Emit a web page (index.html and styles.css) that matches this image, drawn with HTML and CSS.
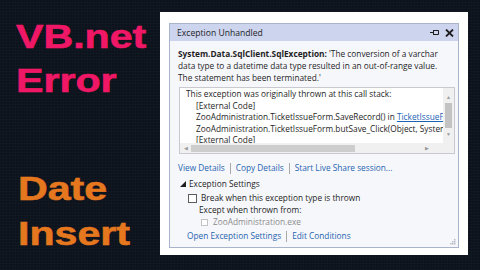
FILE: index.html
```html
<!DOCTYPE html>
<html>
<head>
<meta charset="utf-8">
<link rel="stylesheet" href="styles.css">
</head>
<body>
<div class="page">
  <div class="promo">
    <div class="promo-top">
      <div class="big">VB.net</div>
      <div class="big">Error</div>
    </div>
    <div class="promo-bottom">
      <div class="big">Date</div>
      <div class="big">Insert</div>
    </div>
  </div>
  <div class="frame">
    <div class="dialog">
      <div class="titlebar">
        <span class="title">Exception Unhandled</span>
        <span class="tools">
          <svg class="pin" width="9" height="7" viewBox="0 0 9 7"><path d="M0 3.5H3.5M3.5 1V6M3.5 1.5H8.5V5.5H3.5" fill="none" stroke="#1e1e1e" stroke-width="1"/></svg>
          <svg class="close" width="9" height="8" viewBox="0 0 9 8"><path d="M1 0.5L8 7.5M8 0.5L1 7.5" stroke="#1e1e1e" stroke-width="1.8"/></svg>
        </span>
      </div>
      <div class="body">
        <div class="message">
          <div class="line"><b>System.Data.SqlClient.SqlException:</b> 'The conversion of a varchar</div>
          <div class="line">data type to a datetime data type resulted in an out-of-range value.</div>
          <div class="line">The statement has been terminated.'</div>
        </div>
        <div class="stackbox">
          <div class="stack">
            <div class="sline">This exception was originally thrown at this call stack:</div>
            <div class="sline ind">[External Code]</div>
            <div class="sline ind">ZooAdministration.TicketIssueForm.SaveRecord() in <span class="ulink">TicketIssueFor</span></div>
            <div class="sline ind">ZooAdministration.TicketIssueForm.butSave_Click(Object, System.E</div>
            <div class="sline ind">[External Code]</div>
          </div>
          <div class="vscroll">
            <span class="arr">▲</span>
            <span class="vthumb"></span>
            <span class="arr">▼</span>
          </div>
          <div class="hscroll">
            <span class="arr">◀</span>
            <span class="hthumb"></span>
            <span class="arr">▶</span>
          </div>
          <div class="corner"></div>
        </div>
        <div class="links">
          <span class="link">View Details</span><span class="sep"></span><span class="link">Copy Details</span><span class="sep"></span><span class="link">Start Live Share session...</span>
        </div>
        <div class="settings-head">
          <svg class="tri" width="6" height="6" viewBox="0 0 6 6"><path d="M6 0V6H0Z" fill="#1e1e1e"/></svg>
          <span>Exception Settings</span>
        </div>
        <div class="check-row">
          <span class="box"></span><span>Break when this exception type is thrown</span>
        </div>
        <div class="except">Except when thrown from:</div>
        <div class="check-row sub">
          <span class="box dis"></span><span class="grey">ZooAdministration.exe</span>
        </div>
        <div class="links bottom">
          <span class="link">Open Exception Settings</span><span class="sep"></span><span class="link">Edit Conditions</span>
        </div>
        <svg class="grip" width="6" height="6" viewBox="0 0 6 6"><g fill="#b8bcc8"><rect x="4" y="0" width="1.5" height="1.5"/><rect x="2" y="2" width="1.5" height="1.5"/><rect x="4" y="2" width="1.5" height="1.5"/><rect x="0" y="4" width="1.5" height="1.5"/><rect x="2" y="4" width="1.5" height="1.5"/><rect x="4" y="4" width="1.5" height="1.5"/></g></svg>
      </div>
    </div>
  </div>
</div>
</body>
</html>
```
FILE: styles.css
```css
html, body {
  margin: 0;
  padding: 0;
}
body {
  width: 480px;
  height: 270px;
  overflow: hidden;
  background-color: #0d131c;
  background-image:
    repeating-linear-gradient(0deg, rgba(255,255,255,0.015) 0 1px, transparent 1px 3px),
    repeating-linear-gradient(90deg, rgba(255,255,255,0.012) 0 1px, transparent 1px 3px);
}
.page {
  display: flex;
  height: 270px;
}
.promo {
  width: 160px;
  flex: none;
  display: flex;
  flex-direction: column;
  padding-top: 14px;
  padding-left: 16px;
  box-sizing: border-box;
  font-family: "Liberation Sans", Arial, sans-serif;
  font-weight: bold;
  font-size: 34px;
}
.big {
  transform: scaleX(1.21);
  transform-origin: left center;
  white-space: nowrap;
  -webkit-text-stroke: 0.6px currentColor;
}
.promo-top .big {
  line-height: 44px;
  color: #ef1766;
}
.promo-bottom {
  margin-top: 64px;
  padding-left: 2px;
}
.promo-bottom .big {
  line-height: 45px;
  color: #e5771f;
}
.frame {
  margin-top: 12px;
  width: 308px;
  height: 243px;
  background: #ffffff;
  padding: 11px 9px 7px 9px;
  box-sizing: border-box;
}
.dialog {
  height: 100%;
  border: 1px solid #aab3cc;
  background: #f6f7fb;
  box-sizing: border-box;
  display: flex;
  flex-direction: column;
  font-family: "Open Sans", "Noto Sans", sans-serif;
  font-size: 8.3px;
  color: #1e1e1e;
}
.titlebar {
  height: 17px;
  flex: none;
  background: #ccd4ee;
  display: flex;
  align-items: center;
  justify-content: space-between;
  padding: 0 4px 0 7px;
}
.title {
  font-size: 8.6px;
}
.tools {
  display: flex;
  align-items: center;
  gap: 6px;
}
.body {
  position: relative;
  flex: 1;
  padding: 7px 0 0 8px;
}
.line, .sline {
  white-space: nowrap;
  line-height: 12px;
}
.message {
  height: 36px;
}
.stackbox {
  margin: 3px 3px 0 1px;
  height: 67px;
  border: 1px solid #c9c9cf;
  background: #ffffff;
  box-sizing: border-box;
  display: grid;
  grid-template-columns: 1fr 11px;
  grid-template-rows: 1fr 10px;
}
.stack {
  overflow: hidden;
  padding-left: 6px;
}
.sline {
  line-height: 11.5px;
}
.ind {
  padding-left: 10px;
}
.ulink {
  color: #1a62b5;
  text-decoration: underline;
}
.vscroll {
  background: #f0f0f0;
  display: flex;
  flex-direction: column;
  align-items: center;
  justify-content: space-between;
  padding: 6px 0 6px;
}
.vthumb {
  width: 7px;
  flex: 1;
  margin: 3px 0;
  background: #c3c3c3;
}
.hscroll {
  background: #f0f0f0;
  display: flex;
  align-items: center;
  padding: 0 14px 0 4px;
}
.hthumb {
  width: 164px;
  height: 7px;
  margin-left: 3px;
  margin-right: auto;
  background: #cdcdcd;
}
.corner {
  background: #f0f0f0;
}
.arr {
  font-size: 5px;
  line-height: 6px;
  color: #9a9a9a;
}
.links {
  margin-top: 8px;
  line-height: 12px;
  display: flex;
  align-items: center;
  white-space: nowrap;
}
.link {
  color: #1f64b0;
}
.sep {
  width: 1px;
  height: 11px;
  background: #a9a9a9;
  margin: 0 5px;
}
.settings-head {
  margin-top: 4px;
  line-height: 12px;
  display: flex;
  align-items: center;
  gap: 3px;
  padding-left: 2px;
}
.check-row {
  margin-top: 2px;
  line-height: 12px;
  display: flex;
  align-items: center;
  gap: 4px;
  padding-left: 10px;
}
.box {
  width: 7px;
  height: 7px;
  border: 1px solid #5d5d5d;
  background: #ffffff;
}
.box.dis {
  border-color: #c4c4c4;
  width: 5px;
  height: 5px;
}
.check-row.sub {
  margin-top: 0;
  padding-left: 23px;
  gap: 5px;
}
.grey {
  color: #8c8c8c;
}
.except {
  line-height: 12px;
  padding-left: 21px;
}
.links.bottom {
  margin-top: 2px;
  padding-left: 9px;
}
.grip {
  position: absolute;
  right: 2px;
  bottom: 2px;
}
```
